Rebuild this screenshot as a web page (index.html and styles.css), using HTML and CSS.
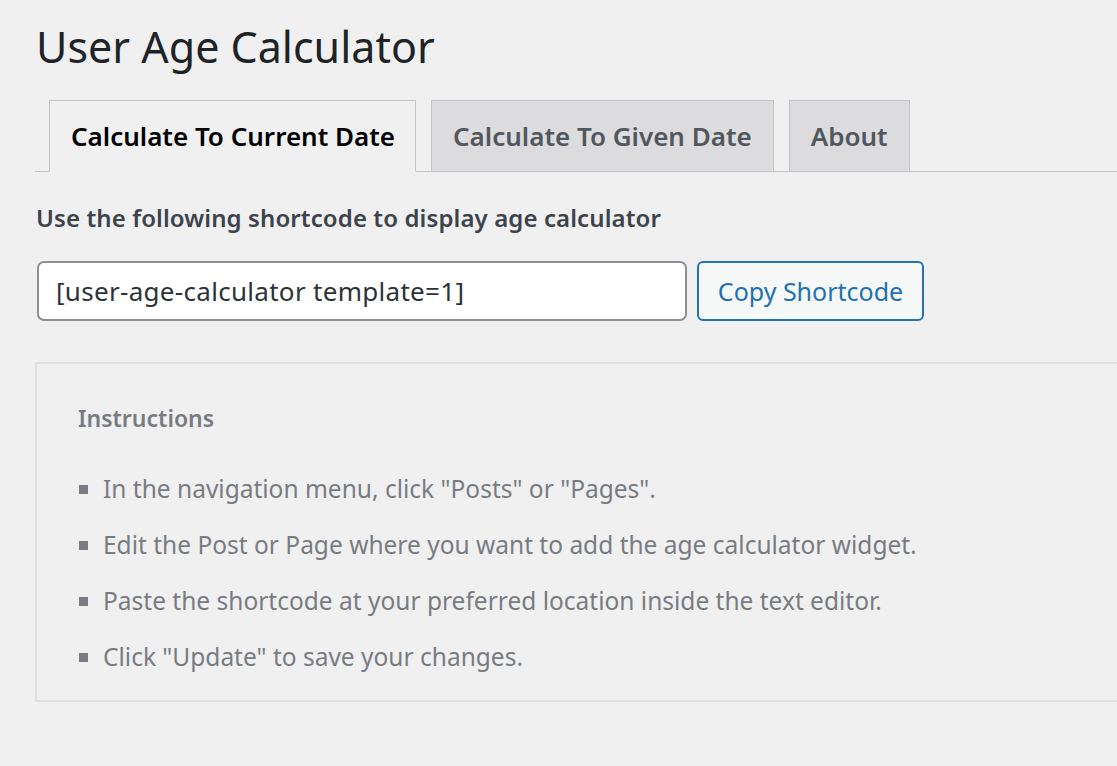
FILE: index.html
```html
<!DOCTYPE html>
<html>
<head>
<meta charset="utf-8">
<link rel="stylesheet" href="styles.css">
</head>
<body>
<div class="wrap">
  <h1 class="title">User Age Calculator</h1>
  <nav class="tabs">
    <a class="tab active">Calculate To Current Date</a>
    <a class="tab">Calculate To Given Date</a>
    <a class="tab">About</a>
  </nav>
  <p class="lead">Use the following shortcode to display age calculator</p>
  <div class="shortcode-row">
    <input class="shortcode" type="text" value="[user-age-calculator template=1]" readonly>
    <button class="copy-btn">Copy Shortcode</button>
  </div>
  <div class="panel">
    <h3 class="panel-title">Instructions</h3>
    <ul class="steps">
      <li>In the navigation menu, click "Posts" or "Pages".</li>
      <li>Edit the Post or Page where you want to add the age calculator widget.</li>
      <li>Paste the shortcode at your preferred location inside the text editor.</li>
      <li>Click "Update" to save your changes.</li>
    </ul>
  </div>
</div>
</body>
</html>
```
FILE: styles.css
```css
* { box-sizing: border-box; }
html, body { margin: 0; padding: 0; }
body {
  background: #f0f0f1;
  font-family: "Noto Sans", "Open Sans", sans-serif;
  color: #3c434a;
  overflow: hidden;
}
.wrap {
  padding: 0 0 0 35px;
}
.title {
  margin: 0;
  padding-top: 16px;
  font-size: 43px;
  font-weight: 400;
  line-height: 62px;
  color: #1d2327;
  padding-left: 1px;
}
.tabs {
  margin-top: 22px;
  display: flex;
  gap: 15px;
  padding-left: 14px;
  border-bottom: 1px solid #c3c4c7;
}
.tab {
  display: block;
  margin-bottom: -1px;
  padding: 11px 21px 10px 21px;
  font-size: 26px;
  line-height: 49px;
  font-weight: 600;
  color: #50575e;
  background: #dcdcde;
  border: 1px solid #c3c4c7;
  text-decoration: none;
}
.tab.active {
  padding-right: 20px;
  background: #f0f0f1;
  border-bottom-color: #f0f0f1;
  color: #000;
}
.lead {
  margin: 27px 0 0 1px;
  font-size: 24px;
  letter-spacing: 0.1px;
  line-height: 38px;
  font-weight: 600;
  color: #3c434a;
}
.shortcode-row {
  display: flex;
  gap: 10px;
  margin-top: 24px;
  padding-left: 2px;
}
.shortcode {
  width: 650px;
  height: 60px;
  border: 2px solid #8c8f94;
  border-radius: 7px;
  background: #fff;
  padding: 0 17px;
  font-family: inherit;
  font-size: 26px;
  letter-spacing: 0.3px;
  color: #2c3338;
  outline: none;
}
.copy-btn {
  height: 60px;
  width: 227px;
  border: 2px solid #2271b1;
  border-radius: 6px;
  background: #f6f7f7;
  color: #2271b1;
  font-family: inherit;
  font-size: 25px;
  padding: 0 10px;
}
.panel {
  margin-top: 41px;
  border: 2px solid #e0e0e0;
  border-right: none;
  padding: 37px 40px 20px 41px;
  height: 340px;
}
.panel-title {
  margin: 0;
  font-size: 23px;
  line-height: 34px;
  font-weight: 600;
  color: #787c82;
}
.steps {
  list-style: none;
  margin: 36px 0 0 0;
  padding: 0;
}
.steps li {
  position: relative;
  padding-left: 25px;
  font-size: 24.5px;
  line-height: 36px;
  margin-bottom: 20px;
  color: #787c82;
}
.steps li::before {
  content: "";
  position: absolute;
  left: 1px;
  top: 14px;
  width: 9px;
  height: 9px;
  background: #787c82;
}
```
